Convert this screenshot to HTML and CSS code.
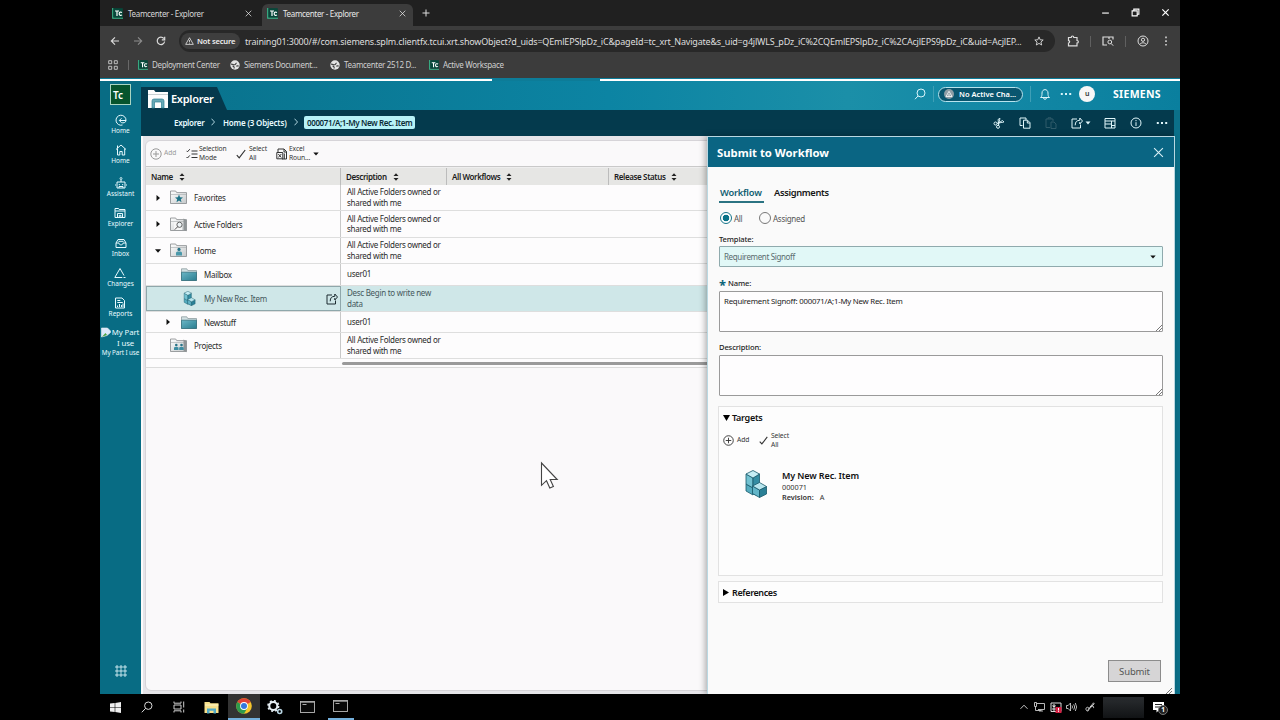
FILE: index.html
```html
<!DOCTYPE html>
<html lang="en">
<head>
<meta charset="utf-8">
<title>Teamcenter - Explorer</title>
<link rel="stylesheet" href="styles.css">
</head>
<body>
<svg class="defs" aria-hidden="true">
  <defs>
    <linearGradient id="gFolder" x1="0" y1="0" x2="1" y2="1"><stop offset="0" stop-color="#6bb6c6"/><stop offset="1" stop-color="#2a7d90"/></linearGradient>
    <linearGradient id="gGrey" x1="0" y1="0" x2="1" y2="1"><stop offset="0" stop-color="#ffffff"/><stop offset="1" stop-color="#c4c8ca"/></linearGradient>
  </defs>
  <symbol id="close" viewBox="0 0 10 10"><path d="M1 1l8 8M9 1l-8 8" fill="none" stroke="currentColor"/></symbol>
  <symbol id="globe" viewBox="0 0 10 10"><circle cx="5" cy="5" r="4.7" fill="#e4e4e4"/><path d="M1 4.2c1.500-.4 2.200.8 3.600.6 1.200-.2.8-1.400 2-1.800M2.500 6.200c1.500-.3 1.800.8 1.600 2.300M6.300 6.200c1-.6 1.700-.3 2.500-.2" fill="none" stroke="#3c3c3c" stroke-width="1.100"/></symbol>
  <symbol id="tc" viewBox="0 0 11 11"><path d="M.8 0v10.200H11" fill="none" stroke="#38b98c" stroke-width="1.300"/><rect x="1.400" y=".2" width="9.400" height="9.300" fill="#06483a"/><path d="M3 3h4M5 3v5M10 4.500c-2-1-2.800 0-2.800 1.200 0 1.500 1.200 2.200 2.800 1.300" fill="none" stroke="#fff" stroke-width="1.200"/></symbol>
  <symbol id="gfolder" viewBox="0 0 17 14"><path d="M.5 13.500V1h5.200l1 1.600h9.800v10.900z" fill="url(#gGrey)" stroke="#85898b" stroke-width=".8"/><path d="M1 4.500h15" stroke="#a5a9ab" stroke-width=".6"/></symbol>
  <symbol id="tfolder" viewBox="0 0 16 13"><path d="M.5 12.500V.8h5.300l1 1.700h8.700v10z" fill="#d2e0e2" stroke="#829296" stroke-width=".7"/><path d="M.5 12.500V4.200h15v8.300z" fill="url(#gFolder)" stroke="#2e6a79" stroke-width=".7"/></symbol>
  <symbol id="cubes" viewBox="0 0 22 28"><g stroke="#18596b" stroke-width=".8" stroke-linejoin="round"><path d="M1 14l7 4v7l-7-4z" fill="#55acbf"/><path d="M8 15l6 3v8l-6-2z" fill="#55acbf"/><path d="M1 4l7 4v10l-7-4z" fill="#72c2d1"/><path d="M14.500 4v10L8 18V8z" fill="#348da3"/><path d="M1 4l7-3.500L14.500 4 8 8z" fill="#c5edf4"/><path d="M7.500 16l7 4v7.500l-7-4z" fill="#62b5c8"/><path d="M21.500 16.500V24l-7 3.500V20z" fill="#2a8096"/><path d="M7.500 16l7-3.500 7 4-7 3.500z" fill="#b8e6ee"/></g></symbol>
  <symbol id="sort" viewBox="0 0 6 8"><path d="M.5 3.100h5L3 .2zM.5 4.900h5L3 7.800z" fill="#222"/></symbol>
  <symbol id="plus" viewBox="0 0 12 12"><path d="M6 3v6M3 6h6" stroke="currentColor" fill="none"/><circle cx="6" cy="6" r="5.200" stroke="currentColor" fill="none"/></symbol>
  <symbol id="check" viewBox="0 0 10 10"><path d="M.8 6.200l2.400 2.600L9.200 1" stroke="currentColor" stroke-width="1.200" fill="none"/></symbol>
  <symbol id="share" viewBox="0 0 12 12"><path d="M6 2H1v9h8.500V7.500M4.200 8.300c0-3.500 1.600-5 4.600-5V1l2.700 3-2.700 3V5" fill="none" stroke="currentColor"/></symbol>
  <symbol id="grip" viewBox="0 0 6 6"><path d="M0 6l6-6M3 6l3-3" stroke="#555" stroke-width=".8"/></symbol>
  <symbol id="term" viewBox="0 0 15 12"><rect x=".5" y=".5" width="14" height="11" fill="#080808" stroke="#b8b8b8" stroke-width=".9"/><path d="M.5 1.500h14" stroke="#aaa" stroke-width=".7"/><path d="M2.500 3.500h4" stroke="#aaa"/></symbol>
</svg>

<div class="desktop">
  <div class="tabstrip">
    <div class="tab"><svg class="fav"><use href="#tc"/></svg><span class="tab-title">Teamcenter - Explorer</span><svg class="x"><use href="#close"/></svg></div>
    <div class="tab active"><svg class="fav"><use href="#tc"/></svg><span class="tab-title">Teamcenter - Explorer</span><svg class="x"><use href="#close"/></svg></div>
    <svg class="newtab" viewBox="0 0 8 8"><path d="M4 .5v7M.5 4h7" stroke="#ddd"/></svg>
    <div class="winctl">
      <svg viewBox="0 0 8 8"><path d="M1 4.500h6" stroke="#fff"/></svg>
      <svg viewBox="0 0 8 8"><path d="M1 2.500h4.500V7H1zM2.500 2.500V1H7v4.500H5.500" fill="none" stroke="#fff"/></svg>
      <svg viewBox="0 0 10 10"><path d="M1.500 1.500l7 7M8.500 1.500l-7 7" stroke="#fff" stroke-width="1.300"/></svg>
    </div>
  </div>

  <div class="toolbar">
    <div class="nav">
      <svg viewBox="0 0 10 10"><path d="M9 5H1.500M5 1.300L1.300 5 5 8.700" fill="none" stroke="#ddd" stroke-width="1.100"/></svg>
      <svg viewBox="0 0 10 10"><path d="M1 5h7.500M5 1.300L8.700 5 5 8.700" fill="none" stroke="#8d8d8d" stroke-width="1.100"/></svg>
      <svg viewBox="0 0 10 10"><path d="M8.600 5.500A3.700 3.700 0 1 1 7.800 2.500M8.700.8v3H5.800" fill="none" stroke="#ddd" stroke-width="1.200"/></svg>
    </div>
    <div class="omni">
      <div class="notsecure"><svg viewBox="0 0 10 9"><path d="M5 .8L9.300 8.300H.7zM5 3.400v2.400M5 6.500v.9" fill="none" stroke="#e8e8e8" stroke-width=".9"/></svg><span>Not secure</span></div>
      <span class="url">training01:3000/#/com.siemens.splm.clientfx.tcui.xrt.showObject?d_uids=QEmlEPSlpDz_iC&amp;pageId=tc_xrt_Navigate&amp;s_uid=g4jlWLS_pDz_iC%2CQEmlEPSlpDz_iC%2CAcjlEPS9pDz_iC&amp;uid=AcjlEP...</span>
      <svg class="star" viewBox="0 0 10 10"><path d="M5 .9l1.200 2.900 3 .2-2.300 2 .8 3L5 7.400 2.300 9l.8-3L.8 4l3-.2z" fill="none" stroke="#ddd" stroke-width=".9"/></svg>
    </div>
    <div class="ext">
      <svg viewBox="0 0 12 12"><path d="M1.500 2.500h2.700c0-2 2.600-2 2.600 0h3.200v3c1.800 0 1.800 2.500 0 2.500v2.800H1.500V8c1.500 0 1.500-2.400 0-2.400z" fill="none" stroke="#ddd" stroke-width="1.200"/></svg>
      <i></i>
      <svg viewBox="0 0 12 12"><path d="M5 10H1V2h10v2.500M7 2v2" fill="none" stroke="#ddd" stroke-width="1.200"/><circle cx="7.800" cy="7" r="1.900" fill="none" stroke="#ddd"/><path d="M9.200 8.500l2 2.200" stroke="#ddd"/></svg>
      <i></i>
      <svg viewBox="0 0 12 12"><circle cx="6" cy="6" r="5" fill="none" stroke="#ddd"/><circle cx="6" cy="4.800" r="1.600" fill="none" stroke="#ddd"/><path d="M2.700 9.300c1.700-2 4.900-2 6.600 0" fill="none" stroke="#ddd"/></svg>
      <svg viewBox="0 0 12 12"><path d="M6 1.500v1.700M6 5.200v1.700M6 8.900v1.700" stroke="#ddd" stroke-width="1.500"/></svg>
    </div>
  </div>

  <div class="bookmarks">
    <svg class="apps" viewBox="0 0 10 10"><path d="M.7.7h3v3h-3zM6.300.7h3v3h-3zM.7 6.300h3v3h-3zM6.300 6.300h3v3h-3z" fill="none" stroke="#ccc" stroke-width=".9"/></svg>
    <i></i>
    <div class="bm b1"><svg><use href="#tc"/></svg><span>Deployment Center</span></div>
    <div class="bm b2"><svg><use href="#globe"/></svg><span>Siemens Document...</span></div>
    <div class="bm b3"><svg><use href="#globe"/></svg><span>Teamcenter 2512 D...</span></div>
    <div class="bm b4"><svg><use href="#tc"/></svg><span>Active Workspace</span></div>
  </div>
  <div class="progress"><i></i><i></i></div>

  <div class="app">
    <div class="rail">
      <div class="logo">Tc</div>
      <div class="r"><svg viewBox="0 0 12 12"><path d="M7.500 11A5 5 0 1 1 11 6.500M11 6.500H4.500M6.500 4.300L4.300 6.500l2.200 2.200M11 6.500c0 2-3 3-4.500 2" fill="none" stroke="currentColor"/></svg><span>Home</span></div>
      <div class="r"><svg viewBox="0 0 12 12"><path d="M1 5.500L6 1l5 4.500M2.500 4.500V11h2.300V7.500h2.400V11h2.500V4.500M2.500 4V1.500" fill="none" stroke="currentColor"/></svg><span>Home</span></div>
      <div class="r gap"><svg viewBox="0 0 12 12"><path d="M2 5h8v6H2zM6 5V2.500M0 7v2M12 7v2M4.300 7v1.200M7.700 7v1.200M4 11V9.500h4V11" fill="none" stroke="currentColor"/><circle cx="6" cy="1.500" r="1" fill="none" stroke="currentColor" stroke-width=".8"/></svg><span>Assistant</span></div>
      <div class="r"><svg viewBox="0 0 12 12"><path d="M1 10.500v-9h3.500l.7 1H11v8zM1 4h10M3.500 10.500v-4h5v4M5.300 10.500V8.300h1.600v2.200" fill="none" stroke="currentColor"/></svg><span>Explorer</span></div>
      <div class="r"><svg viewBox="0 0 12 12"><path d="M1 6l2-3.500h6L11 6v4.500H1zM1 6h3c0 2.500 4 2.500 4 0h3M3.500 4.300h5" fill="none" stroke="currentColor"/></svg><span>Inbox</span></div>
      <div class="r"><svg viewBox="0 0 12 12"><path d="M6 1.500L.8 10.500h7.500M6 1.500l4 7M9.500 10.500h2" fill="none" stroke="currentColor"/></svg><span>Changes</span></div>
      <div class="r"><svg viewBox="0 0 12 12"><path d="M1.500 11V1h6.500l2.500 2.500V11zM3.300 3.500h3M3.300 5.500h5.500M3.500 10V8.500M5.500 10V7M7.500 10V8M9 10V6.500" fill="none" stroke="currentColor"/></svg><span>Reports</span></div>
      <div class="broken"><div><svg viewBox="0 0 10 10"><path d="M.5.500h6l3 3V5L6 8 .5 9.500z" fill="#dbe8fb" stroke="#eee" stroke-width=".6"/><path d="M1 9.300L4.500 5.500 6 7.500z" fill="#49a33d"/></svg><span>My Part<br>I use</span></div><b>My Part I use</b></div>
      <svg class="waffle" viewBox="0 0 12 12"><path d="M1 1h2v2H1zM5 1h2v2H5zM9 1h2v2H9zM1 5h2v2H1zM5 5h2v2H5zM9 5h2v2H9zM1 9h2v2H1zM5 9h2v2H5zM9 9h2v2H9z" fill="none" stroke="currentColor" stroke-width=".8"/></svg>
    </div>

    <div class="main">
      <div class="header">
        <div class="htab"><svg viewBox="0 0 20 20"><path d="M0 19V1h6l1.500 2H20v16z" fill="#fdfdfd"/><path d="M0 5.500h20" stroke="#b9c3c7" stroke-width=".8"/><path d="M4 19V12q0-2 2-2h8q2 0 2 2v7h-2.500v-6h-7v6z" fill="#67a9b7" stroke="#2e7e92" stroke-width=".7"/></svg><span>Explorer</span></div>
        <div class="hright">
          <svg class="srch" viewBox="0 0 12 12"><circle cx="7" cy="5" r="4" fill="none" stroke="currentColor"/><path d="M4 8L1 11.200" stroke="currentColor"/></svg>
          <i></i>
          <div class="chg"><svg viewBox="0 0 10 10"><circle cx="5" cy="5" r="5" fill="#8d9da5"/><path d="M5 2.300L8 7.500H2zM5 5v2.500" fill="none" stroke="#fff" stroke-width=".8"/></svg><span>No Active Cha...</span></div>
          <i></i>
          <svg class="bell" viewBox="0 0 12 12"><path d="M1.500 9.500c1.500-1 1.500-2.500 1.500-4.500 0-4.500 6-4.500 6 0 0 2 0 3.500 1.500 4.500zM4.500 10c0 1.700 3 1.700 3 0" fill="none" stroke="currentColor"/></svg>
          <svg class="dots" viewBox="0 0 12 4"><path d="M.8 2h2M5 2h2M9.200 2h2" stroke="currentColor" stroke-width="2"/></svg>
          <div class="avatar">u</div>
          <span class="brand">SIEMENS</span>
        </div>
      </div>

      <div class="crumbs">
        <span class="c1">Explorer</span>
        <svg viewBox="0 0 4 8"><path d="M.5.700L3.500 4 .5 7.300" fill="none" stroke="#bfe3ec" stroke-width=".9"/></svg>
        <span class="c2">Home (3 Objects)</span>
        <svg viewBox="0 0 4 8"><path d="M.5.700L3.500 4 .5 7.300" fill="none" stroke="#bfe3ec" stroke-width=".9"/></svg>
        <span class="cur">000071/A;1-My New Rec. Item</span>
        <div class="ctools">
          <svg viewBox="0 0 12 12"><circle cx="2.500" cy="6.500" r="1.500" fill="none" stroke="currentColor"/><circle cx="5" cy="9.800" r="1.500" fill="none" stroke="currentColor"/><path d="M4 6.300l7-1.300-1.500-1.500L4.500 6.500M5.300 8.300L7 1.300 5 2.500l.8 5" fill="none" stroke="currentColor" stroke-width=".9"/></svg>
          <svg viewBox="0 0 12 12"><path d="M3.500 8.500H1V1h6v2M4.500 3.200h4l2.500 2.500v5.500H4.500zM8.300 3.500v2.500h2.500" fill="none" stroke="currentColor"/></svg>
          <svg class="off" viewBox="0 0 12 12"><path d="M5 10.500H1V2h7v2M3 2V.8h3V2M6 5h3l2 2v4.500H6z" fill="none" stroke="currentColor"/></svg>
          <svg class="sh" viewBox="0 0 12 12"><use href="#share"/></svg>
          <svg class="dd" viewBox="0 0 6 4"><path d="M.5.500h5L3 3.500z" fill="currentColor"/></svg>
          <svg viewBox="0 0 12 12"><path d="M1 1.500h10v9.500H1zM1 4h10M7.500 4v7M1 7h6.500M7.500 8.500H11" fill="none" stroke="currentColor"/></svg>
          <svg viewBox="0 0 12 12"><circle cx="6" cy="6" r="5" fill="none" stroke="currentColor"/><path d="M6 3v1.200M6 5.200V9" stroke="currentColor"/></svg>
          <svg viewBox="0 0 12 12"><path d="M.8 6h2M5 6h2M9.200 6h2" stroke="currentColor" stroke-width="2"/></svg>
        </div>
      </div>

      <div class="work">
        <div class="sheet">
          <div class="cmds">
            <div class="cmd add"><svg><use href="#plus"/></svg><span>Add</span></div>
            <div class="cmd sel"><svg viewBox="0 0 12 12"><path d="M.5 2.800l1 1L3.800 1.200M.5 9l1 1 2.300-2.600M5.500 3h6M5.500 6h6M5.500 9.500h6" fill="none" stroke="currentColor"/></svg><span>Selection<br>Mode</span></div>
            <div class="cmd all"><svg><use href="#check"/></svg><span>Select<br>All</span></div>
            <div class="cmd xls"><svg viewBox="0 0 12 12"><path d="M2 4V1h6l2.500 2.500V11H6M.8 4.500h6v6.300h-6zM2.300 6l3 3.500M5.300 6l-3 3.500M8 1v3h2.500M8.300 5.500V11" fill="none" stroke="currentColor"/></svg><span>Excel<br>Roun...</span></div>
            <svg class="dd" viewBox="0 0 6 4"><path d="M.3.500h5.400L3 3.500z" fill="#111"/></svg>
          </div>
          <div class="table">
            <div class="th"><div class="nm">Name <svg><use href="#sort"/></svg></div><div class="ds">Description <svg><use href="#sort"/></svg></div><div class="wf">All Workflows <svg><use href="#sort"/></svg></div><div class="rs">Release Status <svg><use href="#sort"/></svg></div></div>
            <div class="tr h26"><div class="nm"><svg class="tw" viewBox="0 0 4 6"><path d="M.5 0v6L4 3z"/></svg><svg class="ic" viewBox="0 0 17 15"><use href="#gfolder" width="17" height="14"/><path d="M9 4.500l1.100 2.700 2.900.2-2.200 1.900.7 2.900L9 10.600l-2.500 1.600.7-2.900L5 7.400l2.900-.2z" fill="#1c7286"/></svg><span>Favorites</span></div><div class="ds">All Active Folders owned or<br>shared with me</div></div>
            <div class="tr h265"><div class="nm"><svg class="tw" viewBox="0 0 4 6"><path d="M.5 0v6L4 3z"/></svg><svg class="ic" viewBox="0 0 17 15"><use href="#gfolder" width="17" height="14"/><path d="M13.500 1.500l3 1.700v11l-3-1.500z" fill="#8f9496"/><path d="M4 5h8v8H4z" fill="#f6f6f6"/><circle cx="9.500" cy="7.800" r="2.600" fill="#eef4f6" stroke="#555" stroke-width=".9"/><path d="M7.700 9.700l-3 3" stroke="#555"/></svg><span>Active Folders</span></div><div class="ds">All Active Folders owned or<br>shared with me</div></div>
            <div class="tr h26"><div class="nm"><svg class="tw open" viewBox="0 0 6 4"><path d="M0 .3h6L3 3.800z"/></svg><svg class="ic" viewBox="0 0 17 15"><use href="#gfolder" width="17" height="14"/><circle cx="9" cy="6.400" r="1.600" fill="#2a7387"/><path d="M6 12.500V10q0-1.500 1.500-1.500h3Q12 8.500 12 10v2.500z" fill="#4a98aa"/></svg><span>Home</span></div><div class="ds">All Active Folders owned or<br>shared with me</div></div>
            <div class="tr h22"><div class="nm lvl"><svg class="ic2"><use href="#tfolder"/></svg><span>Mailbox</span></div><div class="ds">user01</div></div>
            <div class="tr h26 on"><div class="nm lvl"><svg class="ic2 cb"><use href="#cubes"/></svg><span>My New Rec. Item</span><svg class="go"><use href="#share"/></svg></div><div class="ds">Desc Begin to write new<br>data</div></div>
            <div class="tr h21"><div class="nm lvl"><svg class="tw" viewBox="0 0 4 6"><path d="M.5 0v6L4 3z"/></svg><svg class="ic2"><use href="#tfolder"/></svg><span>Newstuff</span></div><div class="ds">user01</div></div>
            <div class="tr h26"><div class="nm"><svg class="ic solo" viewBox="0 0 17 15"><use href="#gfolder" width="17" height="14"/><path d="M13.500 1.500l3 1.700v11l-3-1.500z" fill="#8f9496"/><circle cx="6.300" cy="7" r="1.300" fill="#2a7387"/><circle cx="11.500" cy="7" r="1.300" fill="#2a7387"/><path d="M4 12V9.500q2.300-1.500 4.500 0V12zM9.200 12V9.500q2.300-1.500 4.500 0V12z" fill="#3d8da1"/></svg><span>Projects</span></div><div class="ds">All Active Folders owned or<br>shared with me</div></div>
            <div class="hscroll"><i></i></div>
          </div>
        </div>
      </div>

      <div class="panel">
        <div class="phead"><span>Submit to Workflow</span><svg><use href="#close"/></svg></div>
        <div class="pbody">
          <div class="ptabs"><span class="on">Workflow</span><span>Assignments</span></div>
          <div class="radios"><i class="rd on"></i><span class="ra">All</span><i class="rd"></i><span>Assigned</span></div>
          <div class="lab l1">Template:</div>
          <div class="select"><span>Requirement Signoff</span><svg viewBox="0 0 6 4"><path d="M.3.500h5.400L3 3.500z"/></svg></div>
          <div class="lab l2"><b>*</b>Name:</div>
          <div class="area"><span>Requirement Signoff: 000071/A;1-My New Rec. Item</span><svg><use href="#grip"/></svg></div>
          <div class="lab l3">Description:</div>
          <div class="area"><svg><use href="#grip"/></svg></div>
          <div class="box targets">
            <div class="bt"><svg class="dn" viewBox="0 0 7 6"><path d="M0 0h7L3.500 6z"/></svg><span>Targets</span></div>
            <div class="bc"><svg class="pl"><use href="#plus"/></svg><span class="ad">Add</span><svg class="ck"><use href="#check"/></svg><span>Select<br>All</span></div>
            <div class="item"><svg><use href="#cubes"/></svg><div><div class="it">My New Rec. Item</div><div class="is">000071</div><div class="is"><b>Revision:</b><span>A</span></div></div></div>
          </div>
          <div class="box refs"><div class="bt"><svg class="rt" viewBox="0 0 6 7"><path d="M0 0v7l6-3.500z"/></svg><span>References</span></div></div>
          <div class="submit">Submit</div>
          <svg class="pgrip"><use href="#grip"/></svg>
        </div>
      </div>
    </div>
  </div>

  <div class="taskbar">
    <div class="t"><svg width="11" height="11" viewBox="0 0 11 11"><path d="M0 1.600L4.700 1v4.200H0zM5.300.9L11 0v5.200H5.300zM0 5.800h4.700V10L0 9.400zM5.300 5.800H11V11l-5.700-.9z" fill="#eee"/></svg></div>
    <div class="t"><svg width="12" height="12" viewBox="0 0 12 12"><circle cx="7.300" cy="4.700" r="3.700" fill="none" stroke="#ddd"/><path d="M4.600 7.400L.8 11.300" stroke="#ddd"/></svg></div>
    <div class="t"><svg width="12" height="12" viewBox="0 0 12 12"><path d="M1 .5v1.700h7V.5M1 4h7v4H1zM1 11.500V9.800h7v1.700M10.700.5v6M10.700 8.500v3" fill="none" stroke="#ccc"/></svg></div>
    <div class="t"><svg width="15" height="13" viewBox="0 0 15 13"><path d="M.5 12V1h5l1 1.300h8V12z" fill="#f7e08b"/><path d="M1 4h13.500" stroke="#fff6c8"/><path d="M3 12.500V7.500h9v5H9.500v-2.700h-4v2.700z" fill="#51a9c7"/></svg></div>
    <div class="t chrome"><svg width="16" height="16" viewBox="0 0 16 16"><circle cx="8" cy="8" r="7.800" fill="#f5c52c"/><path d="M8 8L1.250 4.100A7.800 7.800 0 0 1 14.750 4.100z" fill="#e04336"/><path d="M1.250 4.100A7.800 7.800 0 0 0 8 15.800l3.400-5.900L8 8z" fill="#2d9b4e"/><circle cx="8" cy="8" r="3.900" fill="#fff"/><circle cx="8" cy="8" r="3" fill="#3478dd"/></svg></div>
    <div class="t"><svg width="16" height="15" viewBox="0 0 16 15"><circle cx="6.300" cy="6" r="4" fill="none" stroke="#e8f0f5" stroke-width="2"/><circle cx="6.300" cy="6" r="5.300" fill="none" stroke="#e8f0f5" stroke-width="1.600" stroke-dasharray="2 2.160"/><circle cx="12.700" cy="11.500" r="2" fill="none" stroke="#b9d6e4" stroke-width="1.600"/></svg></div>
    <div class="t"><svg width="15" height="12"><use href="#term"/></svg></div>
    <div class="t open"><svg width="15" height="12"><use href="#term"/></svg></div>
    <div class="tray">
      <svg width="8" height="6" viewBox="0 0 8 6"><path d="M.5 4.800L4 1.200l3.500 3.600" fill="none" stroke="#ddd" stroke-width=".9"/></svg>
      <svg class="y1" width="11" height="10" viewBox="0 0 11 10"><path d="M3 1.500h7.500v6H4M.5.500h2v4h-2zM1.500 4.500v4h6M5 9h4" fill="none" stroke="#ccc" stroke-width=".9"/></svg>
      <svg class="y2" width="12" height="11" viewBox="0 0 12 11"><path d="M1 1h10v8.500H1zM3 3h2v1.500H3zM3 6h2v2H3z" fill="none" stroke="#ddd"/><path d="M5.500 5h6v6h-6z" fill="#d51f43"/><path d="M8.500 6v2.500M8.500 9.200v.8" stroke="#fff"/></svg>
      <svg class="y3" width="11" height="10" viewBox="0 0 11 10"><path d="M.5 3.500h1.700L4.500 1v8L2.200 6.500H.5zM6 3.500q1 1.500 0 3M7.700 2.300q2 2.700 0 5.400M9.300 1q2.600 4 0 8" fill="none" stroke="#ccc" stroke-width=".9"/></svg>
      <svg class="y4" width="10" height="10" viewBox="0 0 10 10"><path d="M1 7.500c-.5-3 3.500-3 3 0-.3 2-2.500 2-3 0M2.500 8.500L8.500.8l.7 1-4.700 5M5 4.500c3-1 5 .5 3 1.500" fill="none" stroke="#ddd" stroke-width=".9"/></svg>
      <div class="clock"></div>
      <div class="notif"><svg width="12" height="11" viewBox="0 0 12 11"><path d="M0 0h11v8H6l-2.500 2.500V8H0z" fill="#fff"/><path d="M2 2.500h7M2 5h5" stroke="#222"/></svg><span>1</span></div>
    </div>
  </div>

  <svg class="pointer" viewBox="0 0 20 28"><path d="M1.500 1.500v22.300l5-4.600 3.300 7.300 3.600-1.500-3.200-7h7z" fill="#fff" stroke="#444" stroke-width="1.100"/></svg>
</div>
</body>
</html>
```
FILE: styles.css
```css
* { box-sizing: border-box; }
body { margin: 0; background: #000; font-family: "Noto Sans", "Open Sans", sans-serif; font-size: 8px; color: #222; }
svg { display: block; flex: none; }
i { font-style: normal; }
.defs { position: absolute; width: 0; height: 0; }
.desktop { position: relative; width: 1080px; height: 720px; margin: 0 auto; display: flex; flex-direction: column; overflow: hidden; white-space: nowrap; letter-spacing: -.28px; }

/* browser chrome */
.tabstrip { height: 26px; flex: none; background: #202020; display: flex; align-items: flex-end; }
.tab { height: 22px; width: 162px; padding: 0 10px 3px 12px; display: flex; align-items: center; color: #d6d6d6; }
.tab.active { width: 151px; padding: 0 7px 3px 5px; background: #3c3c3c; border-radius: 6px 6px 0 0; color: #e8e8e8; }
.tab .fav { width: 11px; height: 11px; margin-right: 5px; }
.tab-title { font-size: 8px; flex: 1; letter-spacing: -.33px; }
.tab .x { width: 7px; height: 7px; color: #f0f0f0; }
.newtab { width: 8px; height: 8px; margin: 0 0 9px 9px; }
.winctl { margin-left: auto; display: flex; align-items: center; gap: 21px; padding: 0 10px 9px 0; }
.winctl svg { width: 9px; height: 9px; }
.toolbar { height: 30px; flex: none; background: #3c3c3c; display: flex; align-items: center; }
.nav { display: flex; gap: 13px; padding-left: 10px; width: 79px; }
.nav svg { width: 10px; height: 10px; }
.omni { width: 876px; flex: none; height: 22px; border-radius: 11px; background: #282828; display: flex; align-items: center; }
.notsecure { height: 16px; width: 59px; flex: none; margin-left: 2px; border-radius: 8px; background: #3e3e3e; display: flex; align-items: center; gap: 3px; padding-left: 4px; color: #eee; font-weight: 600; font-size: 7.600px; letter-spacing: -.2px; }
.notsecure svg { width: 9px; height: 8px; }
.url { flex: none; margin-left: 5px; font-size: 9px; letter-spacing: -.195px; color: #dedede; width: 779px; }
.star { width: 10px; height: 10px; margin-left: 10px; }
.ext { display: flex; align-items: center; padding-left: 12px; gap: 11px; }
.ext svg { width: 12px; height: 12px; }
.ext i { width: 1px; height: 11px; background: #606060; }
.bookmarks { height: 22px; flex: none; background: #3c3c3c; display: flex; align-items: center; padding: 0 0 5px 8px; color: #cfcfcf; letter-spacing: -.33px; }
.bookmarks .apps { width: 10px; height: 10px; }
.bookmarks > i { width: 1px; height: 10px; background: #686868; margin: 0 9px 0 10px; }
.bm { display: flex; align-items: center; gap: 4px; }
.bm svg { width: 10px; height: 10px; }
.b1 { width: 92px; } .b2 { width: 100px; } .b3 { width: 99px; }
.progress { height: 3px; flex: none; background: #0d7c98; display: flex; }
.progress i { height: 2px; margin-top: 1px; background: #fff; width: 392px; }
.progress i + i { margin-left: 108px; width: 580px; }

/* application shell */
.app { height: 613px; flex: none; display: flex; background: #0b7089; }
.rail { width: 41px; background: #086c84; color: #e9fbff; display: flex; flex-direction: column; align-items: center; letter-spacing: 0; }
.logo { width: 21px; height: 21px; margin: 3px 0 9px; border: 1px solid #a9d5c2; background: #06542d; color: #fff; font-weight: 600; font-size: 10px; line-height: 20px; padding-left: 2px; }
.r { height: 30px; display: flex; flex-direction: column; align-items: center; }
.r svg { width: 12px; height: 12px; }
.r span { font-size: 6.500px; line-height: 9px; }
.r.gap { margin-top: 3px; }
.broken { font-size: 7.800px; line-height: 10.500px; text-align: center; }
.broken div { display: flex; }
.broken svg { width: 10px; height: 11px; }
.broken div span { width: 29px; letter-spacing: -.1px; }
.broken b { font-weight: 400; font-size: 6.300px; line-height: 9px; display: block; letter-spacing: -.1px; }
.waffle { width: 12px; height: 12px; margin-top: auto; margin-bottom: 17px; }
.main { position: relative; width: 1039px; display: flex; flex-direction: column; }
.header { height: 29px; flex: none; background: linear-gradient(90deg, #09718b, #0c84a3 45%, #1b8fa8 68%, #1489a6 80%, #0a7f9e); display: flex; align-items: flex-start; }
.htab { width: 87px; height: 23px; margin-top: 6px; background: #05384c; clip-path: polygon(0 0, 76px 0, 86px 100%, 0 100%); display: flex; align-items: center; padding-left: 7px; color: #fff; font-size: 11px; font-weight: 600; }
.htab svg { width: 20px; height: 20px; margin-right: 3px; }
.hright { margin-left: auto; display: flex; align-items: center; height: 26px; color: #d8f4fa; padding-right: 15px; }
.srch { width: 12px; height: 12px; }
.hright i { width: 1px; height: 16px; background: #3f9fb6; margin: 0 6px 0 7px; }
.chg { width: 85px; height: 15px; margin-left: -2px; border: 1px solid #b8e4ee; border-radius: 8px; background: #09566f; display: flex; align-items: center; padding-left: 5px; color: #fff; font-size: 7.500px; font-weight: 600; gap: 5px; letter-spacing: 0; }
.chg svg { width: 10px; height: 10px; }
.bell { width: 12px; height: 12px; margin-left: 2px; }
.dots { width: 12px; height: 4px; margin-left: 9px; }
.avatar { width: 16px; height: 16px; margin-left: 7px; border-radius: 50%; background: #f7f7f7; color: #333; text-align: center; line-height: 15px; font-size: 7px; font-weight: 600; }
.brand { margin-left: 18px; width: 52px; color: #fff; font-size: 10.500px; font-weight: 700; letter-spacing: .3px; line-height: 14px; margin-top: -1px; }
.crumbs { width: 1033px; height: 26px; flex: none; background: #043a4d; display: flex; align-items: center; color: #e8fbff; font-size: 8px; font-weight: 600; padding: 0 0 2px 33px; letter-spacing: -.2px; }
.crumbs > svg { width: 4px; height: 8px; margin: 0 8px 0 7px; }
.crumbs .c1 { width: 30px; letter-spacing: -.28px; } .crumbs .c2 { width: 64px; }
.crumbs .cur { width: 111px; margin-left: -2px; height: 13px; line-height: 13px; padding-left: 3px; border-radius: 2px; background: #b7f2f7; color: #0b2a36; letter-spacing: -.38px; }
.ctools { margin-left: auto; display: flex; align-items: center; padding: 1px 6px 0 0; gap: 14px; color: #e0f6fa; }
.ctools svg { width: 12px; height: 12px; }
.ctools .dd { width: 6px; height: 4px; margin: 0 -1px 0 -12px; }
.ctools .off { color: #2f5b6a; }

/* explorer table */
.work { width: 1033px; flex: 1; background: #e6e5e9; border-left: 2px solid #fbfbfb; padding: 4px 0 3px 2px; }
.sheet { height: 100%; background: #faf9fa; border: 1px solid #d6d4d8; border-radius: 6px; overflow: hidden; }
.cmds { height: 26px; display: flex; align-items: center; font-size: 6.700px; line-height: 8.700px; color: #333; border-bottom: 1px solid #c9c9c9; padding-left: 4px; letter-spacing: -.1px; }
.cmd { display: flex; align-items: center; gap: 3px; }
.cmd svg { width: 12px; height: 12px; }
.cmd.add { color: #999; width: 36px; gap: 2px; } .cmd.sel { width: 50px; gap: 1px; } .cmd.all { width: 40px; } .cmd.all svg { width: 10px; height: 10px; } .cmd.xls { width: 37px; gap: 1px; }
.cmds .dd { width: 6px; height: 4px; }
.table { border-bottom: 1px solid #dcdcdc; background: #fdfcfd; }
.th { height: 18px; display: flex; background: #e6e6e4; border-top: 1px solid #eee; font-size: 8px; font-weight: 600; color: #1c1c1c; letter-spacing: -.38px; }
.th div { display: flex; align-items: center; gap: 6px; border-right: 1px solid #bcbcbc; padding-left: 5px; height: 100%; }
.th svg { width: 6px; height: 8px; }
.th .nm { width: 195px; } .th .ds { width: 106px; } .th .wf { width: 162px; } .th .rs { width: 200px; }
.tr { display: flex; border-bottom: 1px solid #dedede; color: #2a2a2a; font-size: 8px; }
.tr .nm { width: 195px; display: flex; align-items: center; border-right: 1px solid #c8c8c8; padding-left: 10px; }
.tr .ds { padding-left: 6px; display: flex; align-items: center; line-height: 10.400px; font-size: 8px; }
.h26 { height: 26px; } .h265 { height: 27px; } .h22 { height: 22px; } .h21 { height: 21px; }
.tw { width: 4px; height: 6px; margin-right: 10px; fill: #111; }
.tw.open { width: 6px; height: 4px; margin: 0 9px 0 -1px; }
.ic { width: 17px; height: 15px; margin-right: 7px; }
.ic.solo { margin-left: 14px; }
.lvl .ic2 { width: 16px; height: 13px; margin: 0 7px 0 25px; }
.lvl .cb { width: 15px; height: 15px; margin: 0 7px 0 26px; }
.lvl .tw { margin: 0 11px 0 10px; }
.lvl .tw + .ic2 { margin-left: 0; }
.tr.on { background: #cfe7e8; color: #45585c; }
.tr.on .nm { border: 1px solid #8fa7ab; padding-left: 9px; }
.go { width: 12px; height: 12px; margin-left: auto; margin-right: 2px; color: #1c2b30; }
.hscroll { height: 8px; padding: 3px 0 0 196px; }
.hscroll i { display: block; height: 3px; border-radius: 2px; background: #9a9a9a; width: 420px; }

/* workflow drawer lying over the table */
.panel { position: absolute; left: 566px; top: 55px; width: 468px; height: 558px; background: #fafafa; border: 1px solid #b9d8e2; border-bottom: 0; box-shadow: -2px 0 6px rgba(0,0,0,.3); display: flex; flex-direction: column; }
.phead { height: 30px; flex: none; background: #0a6583; display: flex; align-items: center; justify-content: space-between; padding: 0 10px 0 9px; color: #fff; font-size: 11.300px; font-weight: 700; letter-spacing: 0; }
.phead svg { width: 11px; height: 11px; color: #d9f0f6; }
.pbody { position: relative; flex: 1; padding: 15px 11px 0 11px; display: flex; flex-direction: column; }
.ptabs { display: flex; height: 21px; font-size: 9.300px; font-weight: 600; color: #161616; gap: 9px; letter-spacing: -.34px; }
.ptabs span { line-height: 22px; padding: 0 1px; }
.ptabs .on { color: #135f72; border-bottom: 2px solid #2b7382; width: 45px; letter-spacing: -.2px; }
.radios { display: flex; align-items: center; margin-top: 9px; height: 12px; color: #555; }
.rd { width: 12px; height: 12px; border: 1px solid #777; border-radius: 50%; margin: 0 2px 0 1px; }
.rd.on { border-color: #16758a; background: radial-gradient(circle, #087288 3px, #fff 3.600px); }
.ra { width: 24px; }
.lab { font-size: 7.600px; line-height: 10px; font-weight: 500; color: #222; letter-spacing: -.15px; display: flex; }
.l1 { margin-top: 10px; } .l2 { margin-top: 11px; } .l3 { margin-top: 10px; }
.l2 b { color: #0d6479; font-size: 13px; width: 9px; line-height: 14px; height: 10px; }
.select { height: 21px; margin-top: 2px; border: 1px solid #8faaad; border-radius: 1px; background: #e1f8f7; display: flex; align-items: center; justify-content: space-between; padding: 0 6px 0 4px; color: #5a6c6f; letter-spacing: -.36px; }
.select svg { width: 6px; height: 4px; fill: #111; }
.area { position: relative; height: 41px; margin-top: 3px; border: 1px solid #9a9a9a; border-radius: 1px; background: #fefdfe; padding: 3px 4px; line-height: 12px; font-size: 7.800px; letter-spacing: -.22px; }
.area svg { position: absolute; right: 0; bottom: 0; width: 6px; height: 6px; }
.box { border: 1px solid #e2e2e2; background: #fdfdfd; margin: 0 0 0 -1px; padding-left: 4px; }
.targets { height: 170px; margin-top: 10px; }
.bt { display: flex; align-items: center; height: 21px; font-size: 9px; font-weight: 600; color: #111; gap: 2px; letter-spacing: -.3px; }
.dn { width: 7px; height: 6px; } .rt { width: 6px; height: 7px; }
.bc { display: flex; align-items: center; height: 25px; font-size: 6.700px; line-height: 8.700px; color: #333; letter-spacing: -.1px; }
.pl { width: 11px; height: 11px; } .ad { width: 22px; margin-left: 3px; } .ck { width: 9px; height: 9px; margin-right: 3px; }
.item { display: flex; padding: 16px 0 0 22px; }
.item svg { width: 22px; height: 28px; margin: 1px 15px 0 0; }
.it { font-size: 9px; font-weight: 600; line-height: 13px; color: #111; letter-spacing: -.12px; }
.is { font-size: 7.300px; line-height: 10.400px; color: #333; letter-spacing: 0; }
.is span { margin-left: 6px; }
.is b { font-weight: 600; }
.refs { height: 22px; margin-top: 5px; }
.refs .bt { height: 20px; gap: 3px; letter-spacing: -.38px; }
.submit { width: 53px; height: 22px; margin: 57px 2px 0 auto; border: 1px solid #8c8c8c; background: #d6d5d6; color: #555; text-align: center; line-height: 21px; font-size: 9.500px; letter-spacing: -.15px; }
.pgrip { position: absolute; right: 2px; bottom: 0; width: 6px; height: 6px; }

/* windows taskbar */
.taskbar { height: 26px; flex: none; background: #000; display: flex; align-items: stretch; }
.t { width: 32px; display: flex; align-items: center; justify-content: center; padding-right: 2px; }
.t.chrome { background: #333; border-bottom: 2px solid #74b0dc; padding-right: 1px; }
.t.open { width: 26px; margin-left: 4px; border-bottom: 2px solid #74b0dc; }
.tray { margin-left: auto; display: flex; align-items: center; }
.y1 { margin-left: 6px; } .y2 { margin-left: 5px; } .y3 { margin-left: 4px; } .y4 { margin-left: 8px; }
.clock { width: 41px; height: 21px; margin-left: 8px; background: linear-gradient(#2a2d30, #111315); }
.notif { position: relative; width: 27px; margin-left: 9px; }
.notif span { position: absolute; left: 5px; top: 3px; width: 10px; height: 10px; border-radius: 50%; background: #222; border: 1px solid #777; color: #fff; font-size: 6.500px; line-height: 8px; text-align: center; font-weight: 700; }
.pointer { position: absolute; left: 440px; top: 461px; width: 20px; height: 29px; }
```
